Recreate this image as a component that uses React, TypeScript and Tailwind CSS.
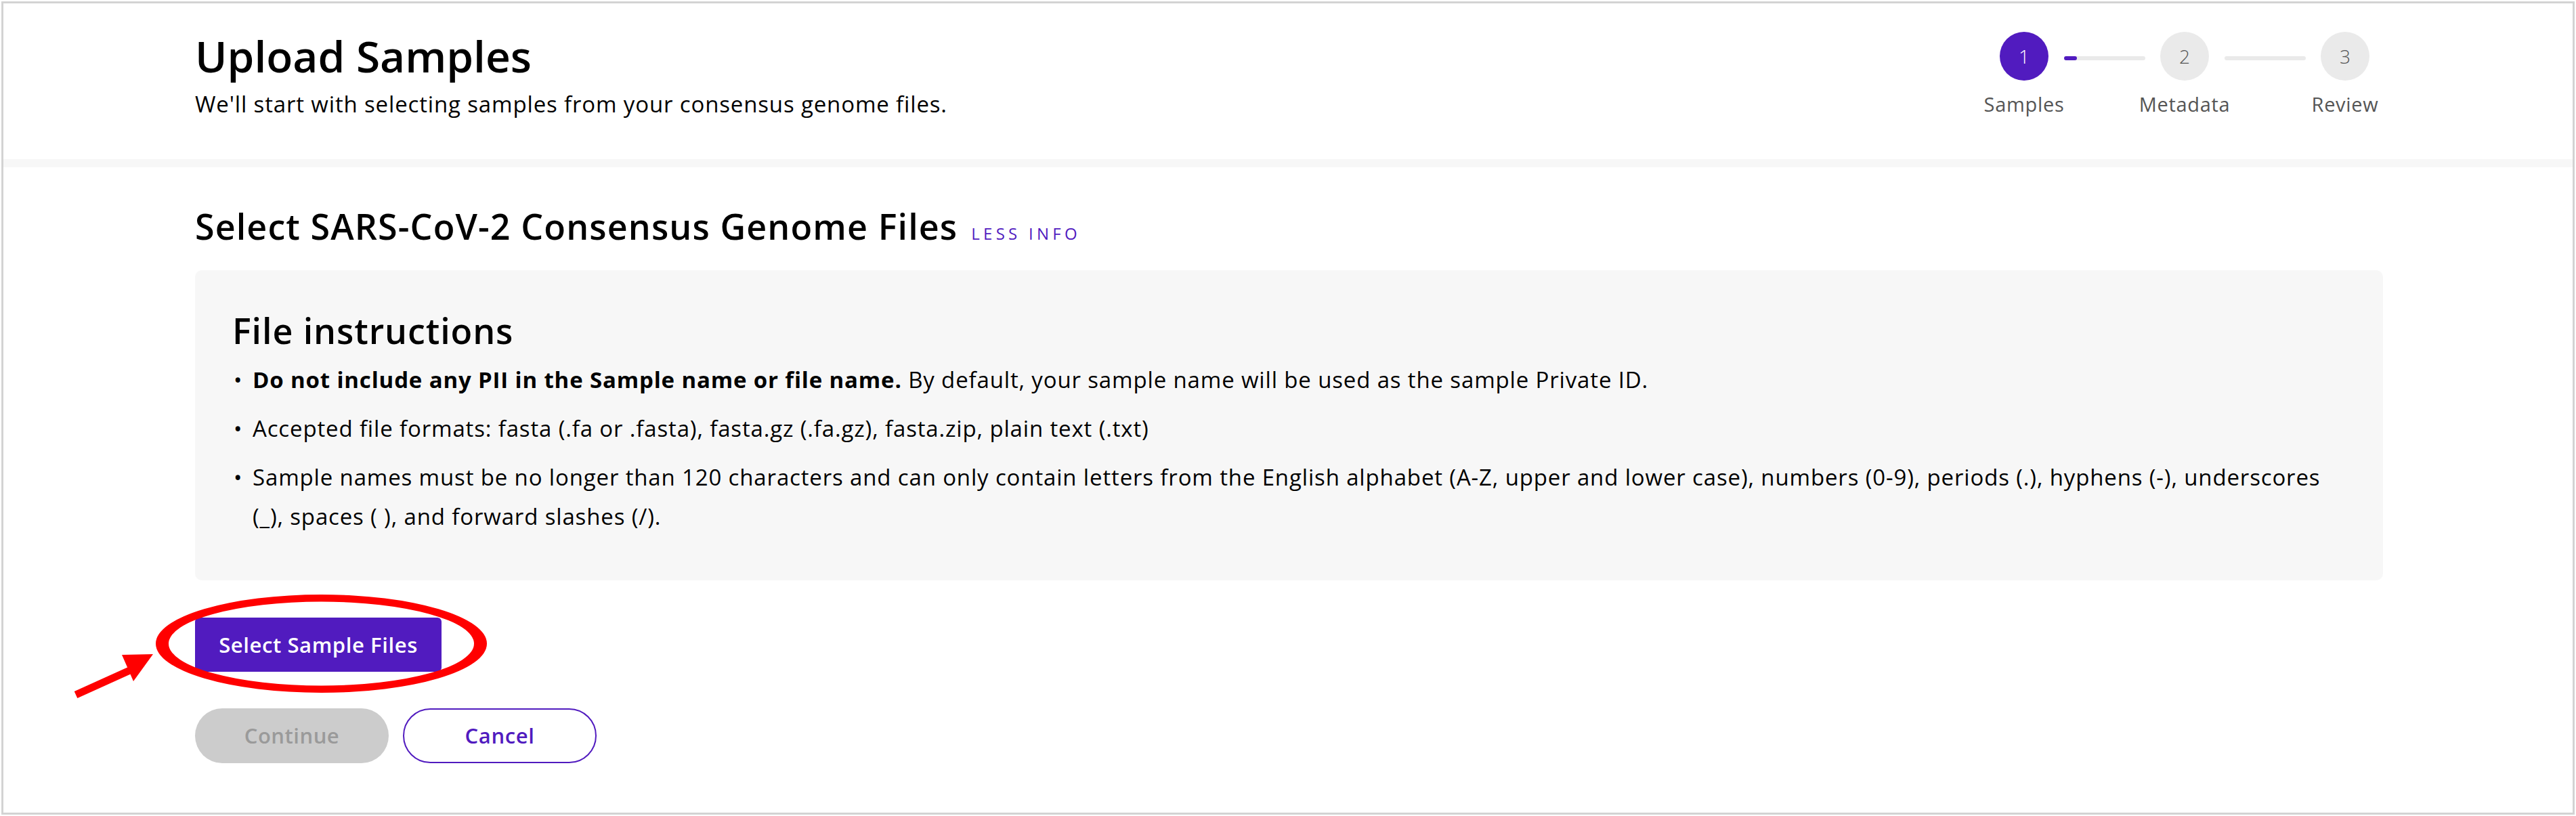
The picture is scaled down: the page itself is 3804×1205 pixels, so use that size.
import React from "react";

function Step({ n, label, active }: { n: number; label: string; active?: boolean }) {
  return (
    <div className="flex w-[72px] flex-col items-center">
      <div
        className={
          active
            ? "flex h-[72px] w-[72px] items-center justify-center rounded-full bg-[#511bbf] text-[28px] font-light leading-none text-white"
            : "flex h-[72px] w-[72px] items-center justify-center rounded-full bg-[#eaeaea] text-[28px] font-light leading-none text-[#555555]"
        }
      >
        {n}
      </div>
      <div className="mt-[17px] whitespace-nowrap text-[29px] leading-[36px] tracking-[0.7px] text-[#555555]">
        {label}
      </div>
    </div>
  );
}

function Connector({ progress }: { progress?: boolean }) {
  return (
    <div className="ml-[23px] mr-[22px] mt-[36px] h-[6px] w-[120px] rounded-full bg-[#eaeaea]">
      {progress ? <div className="h-[6px] w-[19px] rounded-full bg-[#511bbf]" /> : null}
    </div>
  );
}

function Bullet({ children, first }: { children: React.ReactNode; first?: boolean }) {
  return (
    <li className={first ? "flex" : "mt-[14px] flex"}>
      <span className="w-[30px] shrink-0 pl-[2px]">•</span>
      <span>{children}</span>
    </li>
  );
}

export default function App() {
  return (
    <div className="relative h-[1205px] w-[3804px] bg-white p-[2px] font-['Open_Sans',sans-serif] text-black">
      <div className="flex h-full flex-col border-[3px] border-[#d3d3d3]">
        {/* Header */}
        <div className="flex h-[230px] shrink-0 justify-between pl-[283px] pr-[300px]">
          <div className="pt-[46px]">
            <h1 className="text-[64px] font-semibold leading-[64px]">Upload Samples</h1>
            <p className="mt-[19px] text-[33px] leading-[40px] tracking-[0.85px]">
              We'll start with selecting samples from your consensus genome files.
            </p>
          </div>
          <div className="flex items-start pt-[42px]">
            <Step n={1} label="Samples" active />
            <Connector progress />
            <Step n={2} label="Metadata" />
            <Connector />
            <Step n={3} label="Review" />
          </div>
        </div>
        <div className="h-[12px] shrink-0 bg-[#f7f7f7]" />

        {/* Content */}
        <div className="pl-[283px] pr-[280px] pt-[57px]">
          <div className="flex items-baseline">
            <h2 className="text-[52px] font-semibold leading-[60px] tracking-[1.1px]">
              Select SARS-CoV-2 Consensus Genome Files
            </h2>
            <span className="ml-[20px] text-[24px] uppercase tracking-[0.22em] text-[#511bbf]">Less info</span>
          </div>

          <div className="mt-[35px] rounded-[10px] bg-[#f7f7f7] pb-[65px] pl-[55px] pr-[55px] pt-[59px]">
            <h3 className="text-[52px] font-semibold leading-[60px] tracking-[0.9px]">File instructions</h3>
            <ul className="mt-[14px] text-[33px] leading-[58px] tracking-[0.85px]">
              <Bullet first>
                <b className="font-bold">Do not include any PII in the Sample name or file name.</b> By default, your
                sample name will be used as the sample Private ID.
              </Bullet>
              <Bullet>
                Accepted file formats: fasta (.fa or .fasta), fasta.gz (.fa.gz), fasta.zip, plain text (.txt)
              </Bullet>
              <Bullet>
                Sample names must be no longer than 120 characters and can only contain letters from the English
                alphabet (A-Z, upper and lower case), numbers (0-9), periods (.), hyphens (-), underscores
                <br />
                (_), spaces ( ), and forward slashes (/).
              </Bullet>
            </ul>
          </div>

          <button className="mt-[55px] flex h-[80px] w-[364px] items-center justify-center rounded-[6px] bg-[#511bbf] text-[31px] font-semibold tracking-[0.6px] text-white">
            Select Sample Files
          </button>

          <div className="mt-[54px] flex gap-[21px]">
            <button className="flex h-[81px] w-[286px] items-center justify-center rounded-full bg-[#cccccc] text-[31px] font-semibold tracking-[0.5px] text-[#9a9a9a]">
              Continue
            </button>
            <button className="flex h-[81px] w-[286px] items-center justify-center rounded-full border-2 border-[#511bbf] bg-white text-[31px] font-semibold tracking-[0.6px] text-[#511bbf]">
              Cancel
            </button>
          </div>
        </div>
      </div>

      {/* Red annotation overlay */}
      <svg
        className="pointer-events-none absolute left-0 top-0"
        width="3804"
        height="1205"
        viewBox="0 0 3804 1205"
      >
        <path
          fillRule="evenodd"
          fill="#ff0000"
          d="M230,950.5 a244.5,72.5 0 1,0 489,0 a244.5,72.5 0 1,0 -489,0 Z M249,950.5 a225.5,62 0 1,0 451,0 a225.5,62 0 1,0 -451,0 Z"
        />
        <line x1="112" y1="1026" x2="196" y2="988" stroke="#ff0000" strokeWidth="11" />
        <polygon points="226,966 180,967 197,1006" fill="#ff0000" />
      </svg>
    </div>
  );
}
